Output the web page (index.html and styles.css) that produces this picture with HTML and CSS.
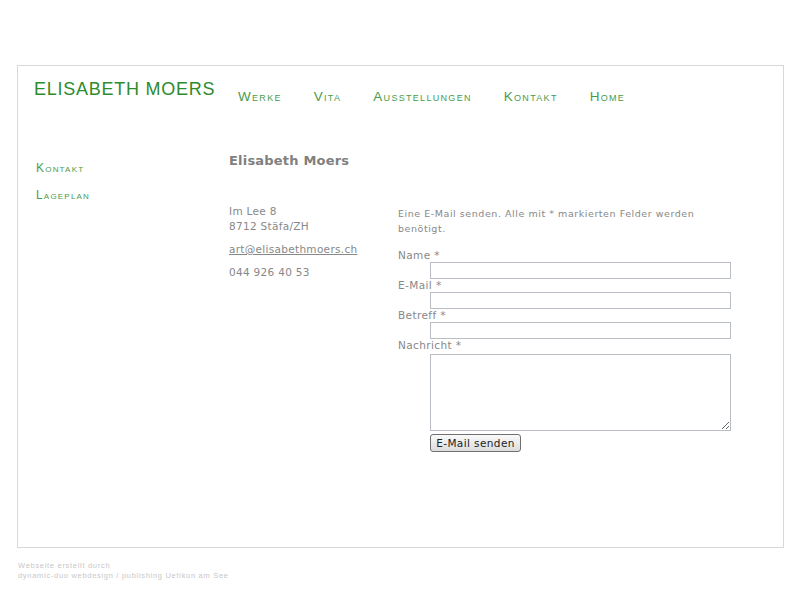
FILE: index.html
```html
<!DOCTYPE html>
<html lang="de">
<head>
<meta charset="utf-8">
<title>Elisabeth Moers – Kontakt</title>
<link rel="stylesheet" href="styles.css">
</head>
<body>
<div class="page">
  <div class="frame">
    <header class="header">
      <div class="brand">ELISABETH MOERS</div>
      <nav class="nav">
        <a href="#">Werke</a>
        <a href="#">Vita</a>
        <a href="#">Ausstellungen</a>
        <a href="#">Kontakt</a>
        <a href="#">Home</a>
      </nav>
    </header>
    <div class="body">
      <aside class="side">
        <a href="#">Kontakt</a>
        <a href="#">Lageplan</a>
      </aside>
      <main class="main">
        <h2 class="name">Elisabeth Moers</h2>
        <div class="cols">
          <div class="address">
            <p>Im Lee 8<br>8712 Stäfa/ZH</p>
            <p><a href="#">art@elisabethmoers.ch</a></p>
            <p>044 926 40 53</p>
          </div>
          <form class="form">
            <p class="intro">Eine E-Mail senden. Alle mit * markierten Felder werden benötigt.</p>
            <label>Name *</label>
            <input type="text" class="field">
            <label>E-Mail *</label>
            <input type="text" class="field">
            <label>Betreff *</label>
            <input type="text" class="field">
            <label>Nachricht *</label>
            <textarea class="area"></textarea>
            <button type="button" class="send">E-Mail senden</button>
          </form>
        </div>
      </main>
    </div>
  </div>
  <footer class="footer">Webseite erstellt durch<br>dynamic-duo webdesign / publishing Uetikon am See</footer>
</div>
</body>
</html>
```
FILE: styles.css
```css
html, body { margin: 0; padding: 0; background: #fff; }
body { font-family: "DejaVu Sans", Verdana, sans-serif; color: #888; }
.page { padding: 65px 0 0 17px; width: 767px; }
.frame {
  border: 1px solid #d8d8d8;
  box-sizing: border-box;
  height: 483px;
}
.header { display: flex; padding: 13px 0 0 16px; }
.brand {
  font-family: "Liberation Sans", Arial, sans-serif;
  font-size: 18px; line-height: 20px; letter-spacing: 0.75px;
  color: #2e8b2e; width: 204px;
}
.nav { display: flex; gap: 32px; padding-top: 11px; }
.nav a, .side a {
  font-family: "Liberation Sans", Arial, sans-serif;
  font-variant: small-caps; text-decoration: none;
  color: #4b9b4b; line-height: 14px;
}
.nav a { font-size: 13.5px; letter-spacing: 1.3px; }
.side a { font-size: 12px; letter-spacing: 1.2px; }
.body { display: flex; padding-top: 49px; }
.side { width: 193px; padding: 8px 0 0 18px; display: flex; flex-direction: column; gap: 13px; }
.main { flex: 1; }
.name { margin: 0; font-size: 13px; line-height: 16px; color: #808080; font-weight: bold; letter-spacing: 0.2px; }
.cols { display: flex; padding-top: 35px; }
.address { width: 169px; font-size: 10.5px; line-height: 15px; letter-spacing: 0.3px; }
.address p { margin: 0 0 8px; }
.address a { color: #888; }
.form { display: flex; flex-direction: column; align-items: flex-start; width: 335px; }
.intro { margin: 2px 0 13px; font-size: 9.5px; line-height: 15px; letter-spacing: 0.55px; width: 320px; }
.form label { font-size: 10.5px; line-height: 13px; letter-spacing: 0.4px; }
.field, .area {
  margin: 0 0 0 32px; width: 301px; box-sizing: border-box;
  border: 1px solid #b8bec4; padding: 0; background: #fff;
}
.field { height: 17px; }
.area { height: 77px; margin-top: 2px; resize: vertical; }
.send {
  margin: 3px 0 0 32px; width: 91px; height: 18px; padding: 0;
  border: 1px solid #707070; border-radius: 3px;
  background: linear-gradient(#fafafa, #dcdcdc);
  font-family: "DejaVu Sans", Verdana, sans-serif; font-size: 10.5px; color: #222; letter-spacing: 0.4px;
}
.footer {
  padding: 13px 0 0 1px;
  font-family: "Liberation Sans", Arial, sans-serif;
  font-size: 7.5px; line-height: 10px; letter-spacing: 0.7px; color: #c8c8c8;
}
```
